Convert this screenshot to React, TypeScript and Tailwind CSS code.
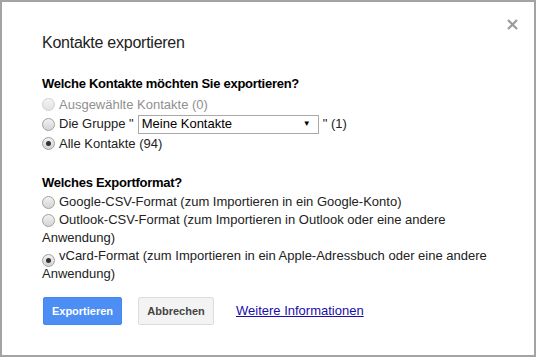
import React, { useState } from 'react';

const font = { fontFamily: '"Liberation Sans", Arial, sans-serif' };

const Radio: React.FC<{ checked?: boolean; disabled?: boolean }> = ({ checked, disabled }) => (
  <span
    className={`inline-flex items-center justify-center w-[13px] h-[13px] rounded-full border shrink-0 ${
      disabled
        ? 'border-[#d0d0d0] bg-gradient-to-b from-[#f4f4f4] to-[#e2e2e2]'
        : 'border-[#a0a0a0] bg-gradient-to-b from-[#f2f2f2] to-[#d4d4d4]'
    }`}
  >
    {checked && <span className="w-[5px] h-[5px] rounded-full bg-[#333]" />}
  </span>
);

export default function App() {
  const [format, setFormat] = useState('vcard');
  const [which, setWhich] = useState('all');

  const formats = [
    { id: 'google', text: 'Google-CSV-Format (zum Importieren in ein Google-Konto)' },
    { id: 'outlook', text: 'Outlook-CSV-Format (zum Importieren in Outlook oder eine andere Anwendung)' },
    { id: 'vcard', text: 'vCard-Format (zum Importieren in ein Apple-Adressbuch oder eine andere Anwendung)' },
  ];

  return (
    <div
      style={font}
      className="relative w-[536px] h-[357px] bg-white border-2 border-[#a3a3a3] box-border text-[13px] text-[#222] overflow-hidden"
    >
      <button className="absolute left-[503px] top-[15px] w-[14px] h-[14px] flex items-center justify-center">
        <svg width="11" height="11" viewBox="0 0 11 11">
          <path d="M1 1 L10 10 M10 1 L1 10" stroke="#9a9a9a" strokeWidth="2.2" />
        </svg>
      </button>

      <div className="pl-[40px] pt-[31px]">
        <h2 className="text-[16px] leading-[20px] tracking-[-0.25px] text-[#222]">Kontakte exportieren</h2>

        <h3 className="mt-[23px] font-bold leading-[16px] tracking-[-0.27px] text-black">Welche Kontakte möchten Sie exportieren?</h3>
        <div className="mt-[3px]">
          <div className="flex items-center gap-[4px] h-[19px] text-[#909090]">
            <Radio disabled />
            <span>Ausgewählte Kontakte (0)</span>
          </div>
          <div className="flex items-center h-[20px] cursor-pointer" onClick={() => setWhich('group')}>
            <Radio checked={which === 'group'} />
            <span className="ml-[4px]">Die Gruppe "</span>
            <div className="ml-[4px] w-[181px] h-[19px] border border-[#a9a9a9] flex items-center justify-between pl-[3px] pr-[7px] bg-white">
              <span className="text-black">Meine Kontakte</span>
              <span className="text-[8px] text-black">▼</span>
            </div>
            <span className="ml-[4px]">" (1)</span>
          </div>
          <div className="flex items-center gap-[4px] h-[19px] cursor-pointer" onClick={() => setWhich('all')}>
            <Radio checked={which === 'all'} />
            <span>Alle Kontakte (94)</span>
          </div>
        </div>

        <h3 className="mt-[22px] font-bold leading-[16px] tracking-[-0.27px] text-black">Welches Exportformat?</h3>
        <div className="mt-[2px] pr-[30px] leading-[18px]">
          {formats.map(f => (
            <div key={f.id} className="cursor-pointer" onClick={() => setFormat(f.id)}>
              <span className="inline-block h-[18px] align-top pt-[3px] mr-[4px]">
                <Radio checked={format === f.id} />
              </span>
              {f.text}
            </div>
          ))}
        </div>

        <div className="mt-[14px] flex items-center">
          <button className="ml-[1px] w-[79px] h-[28px] rounded-[2px] bg-[#4d8ef5] border border-[#4285f4] text-white font-bold text-[11px]">
            Exportieren
          </button>
          <button className="ml-[16px] w-[76px] h-[28px] rounded-[2px] bg-[#f3f3f3] border border-[#dcdcdc] text-[#444] font-bold text-[11px]">
            Abbrechen
          </button>
          <a href="#" className="ml-[22px] text-[#1a0dab] underline">Weitere Informationen</a>
        </div>
      </div>
    </div>
  );
}
